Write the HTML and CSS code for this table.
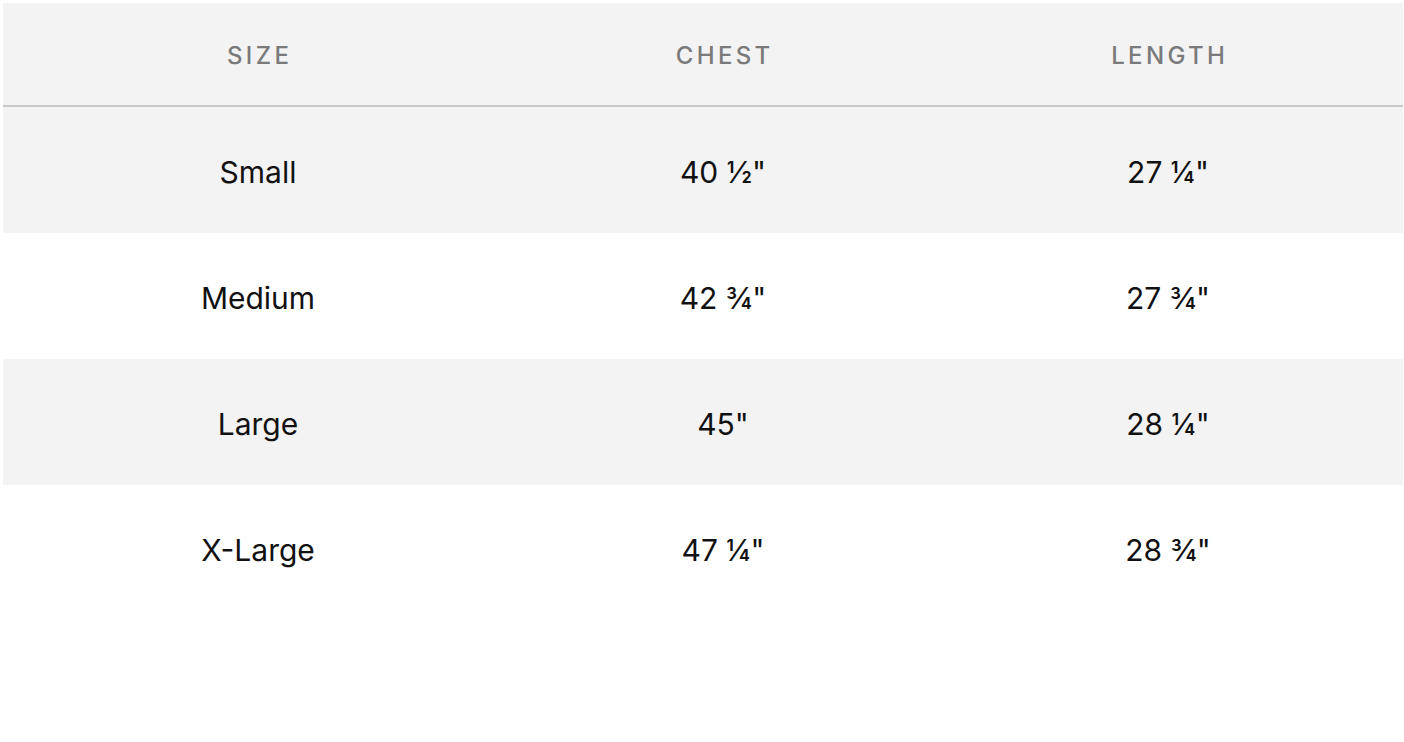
FILE: index.html
```html
<!DOCTYPE html>
<html>
<head>
<meta charset="utf-8">
<link rel="stylesheet" href="styles.css">
</head>
<body>
<div class="table">
  <div class="row head">
    <div class="cell">SIZE</div>
    <div class="cell">CHEST</div>
    <div class="cell">LENGTH</div>
  </div>
  <div class="row odd">
    <div class="cell">Small</div>
    <div class="cell">40 ½"</div>
    <div class="cell">27 ¼"</div>
  </div>
  <div class="row">
    <div class="cell">Medium</div>
    <div class="cell">42 ¾"</div>
    <div class="cell">27 ¾"</div>
  </div>
  <div class="row odd">
    <div class="cell">Large</div>
    <div class="cell">45"</div>
    <div class="cell">28 ¼"</div>
  </div>
  <div class="row">
    <div class="cell">X-Large</div>
    <div class="cell">47 ¼"</div>
    <div class="cell">28 ¾"</div>
  </div>
</div>
</body>
</html>
```

FILE: styles.css
```css
html, body {
  margin: 0;
  padding: 0;
  background: #ffffff;
}
body {
  padding: 3px;
  font-family: Inter, "Liberation Sans", sans-serif;
  color: #111111;
}
.table {
  width: 1400px;
  display: flex;
  flex-direction: column;
}
.row {
  display: grid;
  grid-template-columns: 510px 420px 470px;
  height: 126px;
  box-sizing: border-box;
  padding-top: 3px;
  align-items: center;
  font-size: 30px;
}
.row.odd {
  background: #f3f3f3;
}
.row.head {
  height: 104px;
  padding-top: 2px;
  background: #f3f3f3;
  border-bottom: 2px solid #c8c8c8;
  color: #7a7a7a;
  font-size: 24px;
  font-weight: 500;
  letter-spacing: 0.14em;
}
.cell {
  text-align: center;
}
.head .cell {
  padding-left: 0.14em;
}
```
